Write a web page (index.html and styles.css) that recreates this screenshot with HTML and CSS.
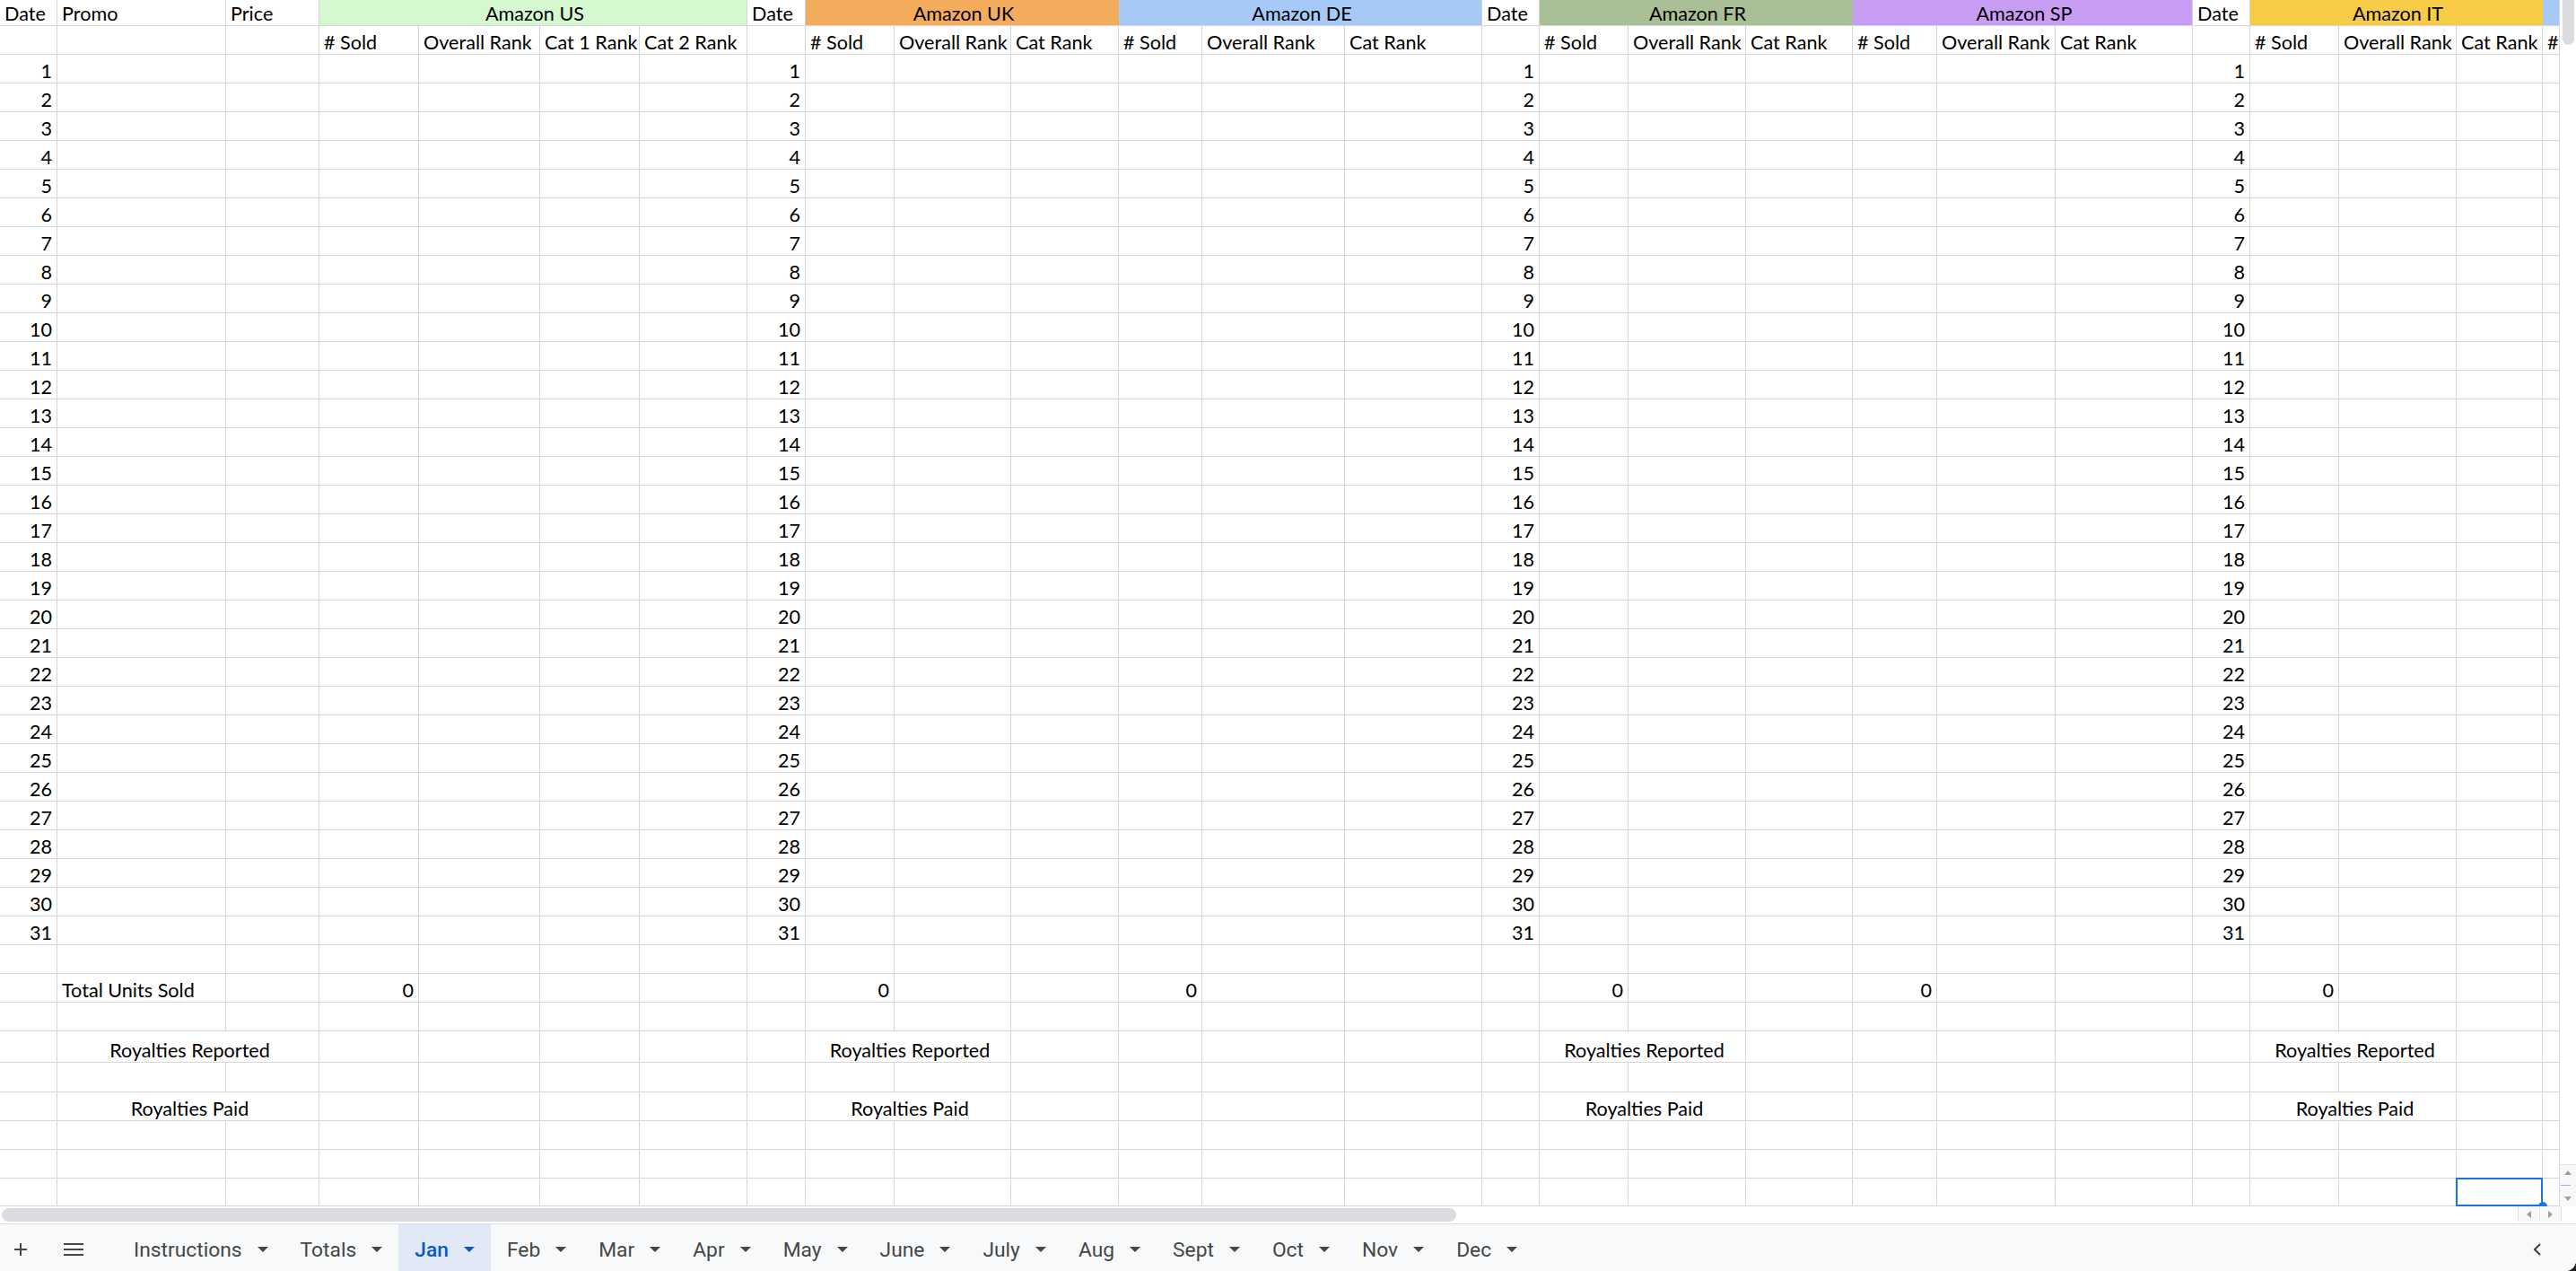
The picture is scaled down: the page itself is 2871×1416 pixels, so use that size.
FILE: index.html
```html
<!DOCTYPE html>
<html>
<head>
    <title>Book Sales - Jan</title>
    <meta charset="UTF-8">
    <link rel="stylesheet" href="styles.css">
</head>
<body>
    <div class="main">
        <div class="sheet">
            <div class="row">
                <div class="cell">Date</div>
                <div class="cell">Promo</div>
                <div class="cell">Price</div>
                <div class="cell center span4 us">Amazon US</div>
                <div class="cell">Date</div>
                <div class="cell center span3 uk">Amazon UK</div>
                <div class="cell center span3 de">Amazon DE</div>
                <div class="cell">Date</div>
                <div class="cell center span3 fr">Amazon FR</div>
                <div class="cell center span3 sp">Amazon SP</div>
                <div class="cell">Date</div>
                <div class="cell center span3 it">Amazon IT</div>
                <div class="cell de"></div>
            </div>
            <div class="row">
                <div class="cell"></div>
                <div class="cell"></div>
                <div class="cell"></div>
                <div class="cell"># Sold</div>
                <div class="cell">Overall Rank</div>
                <div class="cell">Cat 1 Rank</div>
                <div class="cell">Cat 2 Rank</div>
                <div class="cell"></div>
                <div class="cell"># Sold</div>
                <div class="cell">Overall Rank</div>
                <div class="cell">Cat Rank</div>
                <div class="cell"># Sold</div>
                <div class="cell">Overall Rank</div>
                <div class="cell">Cat Rank</div>
                <div class="cell"></div>
                <div class="cell"># Sold</div>
                <div class="cell">Overall Rank</div>
                <div class="cell">Cat Rank</div>
                <div class="cell"># Sold</div>
                <div class="cell">Overall Rank</div>
                <div class="cell">Cat Rank</div>
                <div class="cell"></div>
                <div class="cell"># Sold</div>
                <div class="cell">Overall Rank</div>
                <div class="cell">Cat Rank</div>
                <div class="cell">#</div>
            </div>
            <!-- day rows and totals are added by sheet.js -->
        </div>
        <div class="vscroll">
            <div class="vthumb"></div>
            <div class="vbtns">
                <span class="arrow up"></span>
                <span class="marker"></span>
                <span class="arrow down"></span>
            </div>
        </div>
    </div>

    <div class="hscroll">
        <div class="hthumb"></div>
        <div class="hbtns">
            <span class="hbtn"><span class="arrow left"></span></span>
            <span class="hbtn"><span class="arrow right"></span></span>
        </div>
    </div>

    <div class="tabbar">
        <span class="tool">
            <svg width="16" height="16" viewBox="0 0 16 16"><path d="M8 1v14M1 8h14" stroke="#444746" stroke-width="2" fill="none"/></svg>
        </span>
        <span class="tool">
            <svg width="22" height="14" viewBox="0 0 22 14"><path d="M0 1h22M0 7h22M0 13h22" stroke="#444746" stroke-width="2" fill="none"/></svg>
        </span>
        <div class="tabs">
            <span class="tab">Instructions</span>
            <span class="tab">Totals</span>
            <span class="tab active">Jan</span>
            <span class="tab">Feb</span>
            <span class="tab">Mar</span>
            <span class="tab">Apr</span>
            <span class="tab">May</span>
            <span class="tab">June</span>
            <span class="tab">July</span>
            <span class="tab">Aug</span>
            <span class="tab">Sept</span>
            <span class="tab">Oct</span>
            <span class="tab">Nov</span>
            <span class="tab">Dec</span>
        </div>
        <span class="back">
            <svg width="10" height="14" viewBox="0 0 10 14"><path d="M8 1L2 7l6 6" stroke="#444746" stroke-width="2.2" fill="none"/></svg>
        </span>
    </div>

    <script src="sheet.js"></script>
</body>
</html>
```

FILE: styles.css
```css
html {
    background: #1f1f1f;
}
body {
    margin: 0;
    height: 1416px;
    display: flex;
    flex-direction: column;
    background: #fff;
    border-bottom-right-radius: 12px;
    overflow: hidden;
}
.main {
    display: flex;
    height: 1344px;
    overflow: hidden;
}
.sheet {
    display: grid;
    grid-template-columns: 63px 187px 103px 110px 134px 110px 119px 64px 98px 129px 119px 92px 158px 152px 63px 98px 130px 118px 93px 131px 152px 63px 98px 130px 95px 18px;
    grid-template-rows: 28px 31px repeat(34, 31px) 34px 32px 31px 31px 31px 30px;
    gap: 1px;
    padding: 0 1px 1px 0;
    background: #d6d6d6;
    font-family: Lato, "Liberation Sans", sans-serif;
    font-size: 21.6px;
    line-height: 24px;
    color: #000;
}
.row {
    display: contents;
}
.cell {
    display: flex;
    align-items: flex-end;
    padding: 0 1px 1px 5px;
    background: #fff;
    white-space: nowrap;
    overflow: hidden;
}
.num {
    justify-content: flex-end;
    padding-right: 5px;
}
.center {
    justify-content: center;
}
.span2 { grid-column: span 2; }
.span3 { grid-column: span 3; }
.span4 { grid-column: span 4; }

.us { background: #d5f8d0; }
.uk { background: #f2ac5c; box-shadow: 1px 0 0 #f2ac5c; }
.de { background: #a6c9f6; }
.fr { background: #a9bf96; box-shadow: 1px 0 0 #a9bf96; }
.sp { background: #c79df4; }
.it { background: #f6cc47; box-shadow: 1px 0 0 #f6cc47; }

.sel {
    position: relative;
    overflow: visible;
    outline: 2px solid #1a73e8;
    outline-offset: -1px;
}
.sel::after {
    content: '';
    position: absolute;
    right: -6px;
    bottom: -6px;
    width: 10px;
    height: 10px;
    border-radius: 50%;
    background: #1a73e8;
}

/* scrollbars */
.vscroll {
    width: 18px;
    display: flex;
    flex-direction: column;
    justify-content: space-between;
}
.vthumb {
    height: 50px;
    margin: 0 2px 0 3px;
    border-radius: 0 0 7px 7px;
    background: #dadce0;
}
.vbtns {
    height: 46px;
    display: flex;
    flex-direction: column;
    align-items: center;
    justify-content: space-around;
    border-top: 1px solid #e3e3e3;
    background: #f8f8f8;
}
.marker {
    width: 11px;
    height: 1px;
    margin-left: -6px;
    background: #8ab4f8;
}
.arrow {
    width: 0;
    height: 0;
    border: 4px solid transparent;
}
.arrow.up { border-bottom: 5px solid #9aa0a6; border-top: 0; }
.arrow.down { border-top: 5px solid #9aa0a6; border-bottom: 0; }
.arrow.left { border-right: 5px solid #9aa0a6; border-left: 0; }
.arrow.right { border-left: 5px solid #9aa0a6; border-right: 0; }

.hscroll {
    height: 19px;
    display: flex;
}
.hthumb {
    width: 1621px;
    height: 15px;
    margin: 2px 0 0 2px;
    border-radius: 8px;
    background: #dadce0;
}
.hbtns {
    display: flex;
    margin: 0 16px 2px auto;
    background: #f8f8f8;
    border-left: 1px solid #e3e3e3;
    border-right: 1px solid #e3e3e3;
}
.hbtn {
    width: 23px;
    display: flex;
    align-items: center;
    justify-content: center;
}
.hbtn + .hbtn {
    border-left: 1px solid #e3e3e3;
}

/* sheet tabs */
.tabbar {
    flex: 1;
    display: flex;
    padding-top: 4px;
    border-top: 1px solid #dadce0;
    background: #f8f9fa;
    font-family: Roboto, "Liberation Sans", sans-serif;
    font-size: 22.8px;
    color: #444746;
}
.tool {
    width: 45px;
    display: flex;
    align-items: center;
    justify-content: center;
}
.tool + .tool {
    margin-left: 14px;
}
.tabs {
    display: flex;
    margin-left: 27px;
}
.tab {
    display: flex;
    align-items: center;
    gap: 17px;
    margin-top: -4px;
    padding: 4px 18px 0;
}
.tab::after {
    content: '';
    border: 6px solid transparent;
    border-top-color: currentColor;
    border-bottom: 0;
}
.tab.active {
    background: #e1e9f7;
    color: #0b57d0;
    font-weight: 500;
}
.back {
    display: flex;
    align-items: center;
    margin: 0 38px 0 auto;
}
```

FILE: sheet.js
```js
const sheet = document.querySelector('.sheet');
const COLS = 26;
const DATE_COLS = [0, 7, 14, 21];
const SOLD_COLS = [3, 8, 11, 15, 18, 22];
const LABEL_COLS = [1, 8, 15, 22];

// cellFor(col) returns {text, cls}, or false when the column is covered by a merged cell
function addRow(cellFor) {
    const row = document.createElement('div');
    row.className = 'row';
    for (let col = 0; col < COLS; col++) {
        const spec = cellFor(col);
        if (spec === false) continue;
        const cell = document.createElement('div');
        cell.className = 'cell ' + (spec.cls || '');
        cell.textContent = spec.text || '';
        row.appendChild(cell);
    }
    sheet.appendChild(row);
}

function blank() {
    addRow(() => ({}));
}

function royalties(label) {
    addRow(col => {
        if (LABEL_COLS.includes(col)) return { text: label, cls: 'center span2' };
        if (LABEL_COLS.includes(col - 1)) return false;
        return {};
    });
}

for (let day = 1; day <= 31; day++) {
    addRow(col => DATE_COLS.includes(col) ? { text: day, cls: 'num' } : {});
}
blank();
addRow(col => {
    if (col === 1) return { text: 'Total Units Sold' };
    if (SOLD_COLS.includes(col)) return { text: '0', cls: 'num' };
    return {};
});
blank();
royalties('Royalties Reported');
blank();
royalties('Royalties Paid');
blank();
blank();
addRow(col => col === 24 ? { cls: 'sel' } : {});
```
